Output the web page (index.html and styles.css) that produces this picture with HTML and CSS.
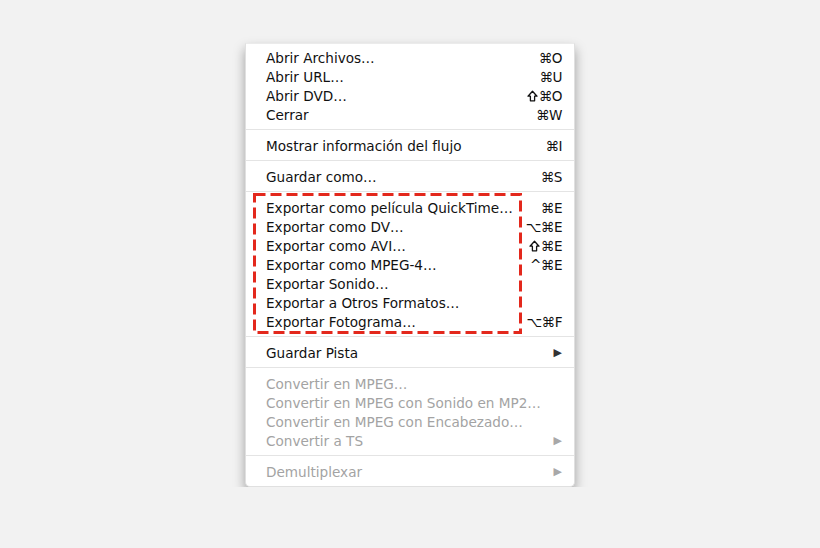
FILE: index.html
```html
<!DOCTYPE html>
<html lang="es">
<head>
    <meta charset="UTF-8">
    <title>Menú Archivo</title>
    <link rel="stylesheet" href="styles.css">
</head>
<body>
    <div class="menu">
        <div class="item"><span>Abrir Archivos…</span><span class="key">⌘O</span></div>
        <div class="item"><span>Abrir URL…</span><span class="key">⌘U</span></div>
        <div class="item"><span>Abrir DVD…</span><span class="key"><svg class="shift" width="11" height="12" viewBox="0 0 11 12"><path d="M5.5 1.2 L10 6.2 H7.6 V10.8 H3.4 V6.2 H1 Z" fill="none" stroke="#111" stroke-width="1.3" stroke-linejoin="round"/></svg>⌘O</span></div>
        <div class="item"><span>Cerrar</span><span class="key">⌘W</span></div>
        <div class="sep"></div>
        <div class="item"><span>Mostrar información del flujo</span><span class="key">⌘I</span></div>
        <div class="sep"></div>
        <div class="item"><span>Guardar como…</span><span class="key">⌘S</span></div>
        <div class="sep"></div>
        <div class="group">
            <div class="item"><span>Exportar como película QuickTime…</span><span class="key">⌘E</span></div>
            <div class="item"><span>Exportar como DV…</span><span class="key">⌥⌘E</span></div>
            <div class="item"><span>Exportar como AVI…</span><span class="key"><svg class="shift" width="11" height="12" viewBox="0 0 11 12"><path d="M5.5 1.2 L10 6.2 H7.6 V10.8 H3.4 V6.2 H1 Z" fill="none" stroke="#111" stroke-width="1.3" stroke-linejoin="round"/></svg>⌘E</span></div>
            <div class="item"><span>Exportar como MPEG-4…</span><span class="key">^⌘E</span></div>
            <div class="item"><span>Exportar Sonido…</span><span class="key"></span></div>
            <div class="item"><span>Exportar a Otros Formatos…</span><span class="key"></span></div>
            <div class="item"><span>Exportar Fotograma…</span><span class="key">⌥⌘F</span></div>
            <svg class="mark" width="269" height="141" viewBox="0 0 269 141">
                <rect x="1.5" y="1.5" width="266" height="138" fill="none" stroke="#e3281c" stroke-width="3" stroke-dasharray="11 5"/>
            </svg>
        </div>
        <div class="sep"></div>
        <div class="item"><span>Guardar Pista</span><span class="arrow">▶</span></div>
        <div class="sep"></div>
        <div class="item off"><span>Convertir en MPEG…</span></div>
        <div class="item off"><span>Convertir en MPEG con Sonido en MP2…</span></div>
        <div class="item off"><span>Convertir en MPEG con Encabezado…</span></div>
        <div class="item off"><span>Convertir a TS</span><span class="arrow">▶</span></div>
        <div class="sep"></div>
        <div class="item off"><span>Demultiplexar</span><span class="arrow">▶</span></div>
    </div>
</body>
</html>
```

FILE: styles.css
```css
body {
    margin: 0;
    padding-top: 43px;
    background-color: #f2f2f2;
    font-family: "DejaVu Sans", "Noto Sans", sans-serif;
    font-size: 13.6px;
    color: #111;
}
.menu {
    width: 330px;
    margin: 0 auto;
    padding: 4px 0 5px;
    background-color: #fff;
    border: 1px solid #e0e0e0;
    border-top-color: #ebebeb;
    border-radius: 0 0 5px 5px;
    box-sizing: border-box;
    box-shadow: 0 6px 12px rgba(0, 0, 0, 0.35);
}
.item {
    display: flex;
    justify-content: space-between;
    align-items: center;
    height: 19px;
    padding: 0 12px 0 20px;
    white-space: nowrap;
}
.key {
    display: flex;
    align-items: center;
    font-size: 13.6px;
    letter-spacing: -0.5px;
}
.shift {
    margin-right: 1px;
}
.arrow {
    font-size: 11px;
    color: #333;
}
.off {
    color: #a3a3a3;
}
.off .arrow {
    color: #a8a8a8;
}
.sep {
    height: 1px;
    margin: 5px 0 6px;
    background-color: #e4e4e4;
}
.group {
    position: relative;
}
.mark {
    position: absolute;
    top: -5px;
    left: 7px;
}
```
